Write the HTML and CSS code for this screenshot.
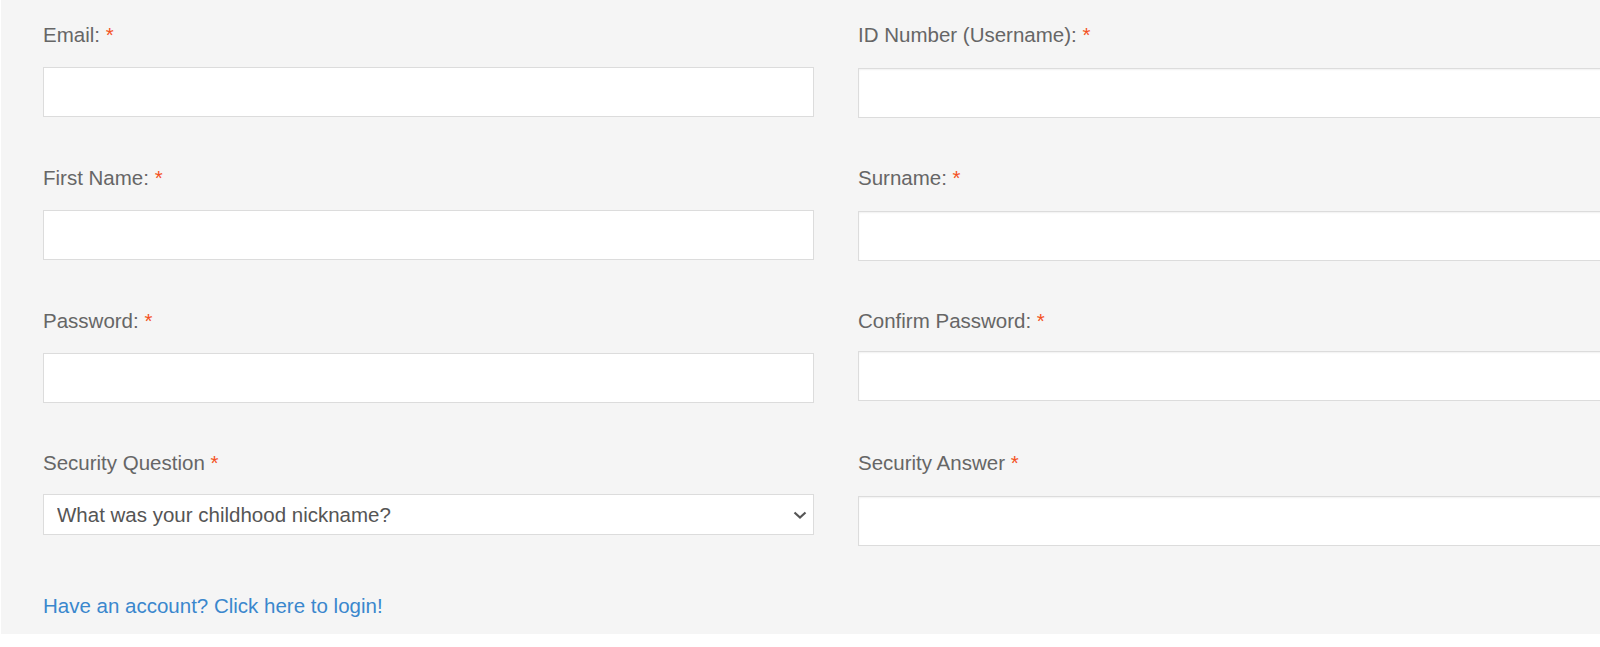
FILE: index.html
```html
<!DOCTYPE html>
<html lang="en">
<head>
<meta charset="utf-8">
<title>Register</title>
<link rel="stylesheet" href="styles.css">
</head>
<body>
<div class="page">
  <form class="form">
    <div class="grid">
      <div class="field">
        <label class="label">Email: <span class="req">*</span></label>
        <input class="input" type="text">
      </div>
      <div class="field right">
        <label class="label">ID Number (Username): <span class="req">*</span></label>
        <input class="input" type="text">
      </div>
      <div class="field">
        <label class="label">First Name: <span class="req">*</span></label>
        <input class="input" type="text">
      </div>
      <div class="field right">
        <label class="label">Surname: <span class="req">*</span></label>
        <input class="input" type="text">
      </div>
      <div class="field">
        <label class="label">Password: <span class="req">*</span></label>
        <input class="input" type="password">
      </div>
      <div class="field right">
        <label class="label">Confirm Password: <span class="req">*</span></label>
        <input class="input up" type="password">
      </div>
      <div class="field">
        <label class="label">Security Question <span class="req">*</span></label>
        <div class="select-wrap">
          <select class="select">
            <option>What was your childhood nickname?</option>
          </select>
          <svg class="chev" width="14" height="10" viewBox="0 0 14 10"><path d="M1.5 2.5 L7 7.5 L12.5 2.5" fill="none" stroke="#555" stroke-width="2.2"/></svg>
        </div>
      </div>
      <div class="field right">
        <label class="label">Security Answer <span class="req">*</span></label>
        <input class="input" type="text">
      </div>
    </div>
    <a class="login" href="#">Have an account? Click here to login!</a>
  </form>
</div>
</body>
</html>
```

FILE: styles.css
```css
html, body {
  margin: 0;
  padding: 0;
  background: #ffffff;
  overflow: hidden;
}
body {
  font-family: "Liberation Sans", Arial, sans-serif;
  width: 1600px;
  height: 647px;
}
.page {
  margin-left: 1px;
  height: 634px;
  background: #f5f5f5;
  overflow: hidden;
}
.form {
  padding: 21px 0 0 42px;
  width: 1700px;
}
.grid {
  display: grid;
  grid-template-columns: 771px 771px;
  column-gap: 44px;
}
.field {
  display: flex;
  flex-direction: column;
  align-items: stretch;
  margin-bottom: 46px;
}
.label {
  font-size: 20.5px;
  line-height: 28px;
  color: #666666;
  margin-bottom: 18px;
}
.req {
  color: #f4511e;
}
.input {
  box-sizing: border-box;
  height: 50px;
  width: 100%;
  margin: 0;
  border: 1px solid #dcdcdc;
  background: #ffffff;
  font-family: inherit;
  font-size: 20px;
  padding: 0 14px;
  outline: none;
}
.right .input {
  box-shadow: inset 0 1px 2px rgba(0, 0, 0, 0.06);
  margin-top: 1px;
}
.right .input.up {
  margin-top: -2px;
}
.select-wrap {
  position: relative;
  height: 41px;
  margin-top: -1px;
}
.select {
  box-sizing: border-box;
  -webkit-appearance: none;
  appearance: none;
  width: 100%;
  height: 41px;
  margin: 0;
  border: 1px solid #dcdcdc;
  border-radius: 0;
  background: #ffffff;
  color: #555555;
  font-family: inherit;
  font-size: 20.5px;
  padding: 0 40px 0 13px;
  outline: none;
}
.chev {
  position: absolute;
  right: 7px;
  top: 16px;
}
.login {
  display: inline-block;
  font-size: 20.5px;
  line-height: 28px;
  color: #3a87cd;
  text-decoration: none;
}
```
